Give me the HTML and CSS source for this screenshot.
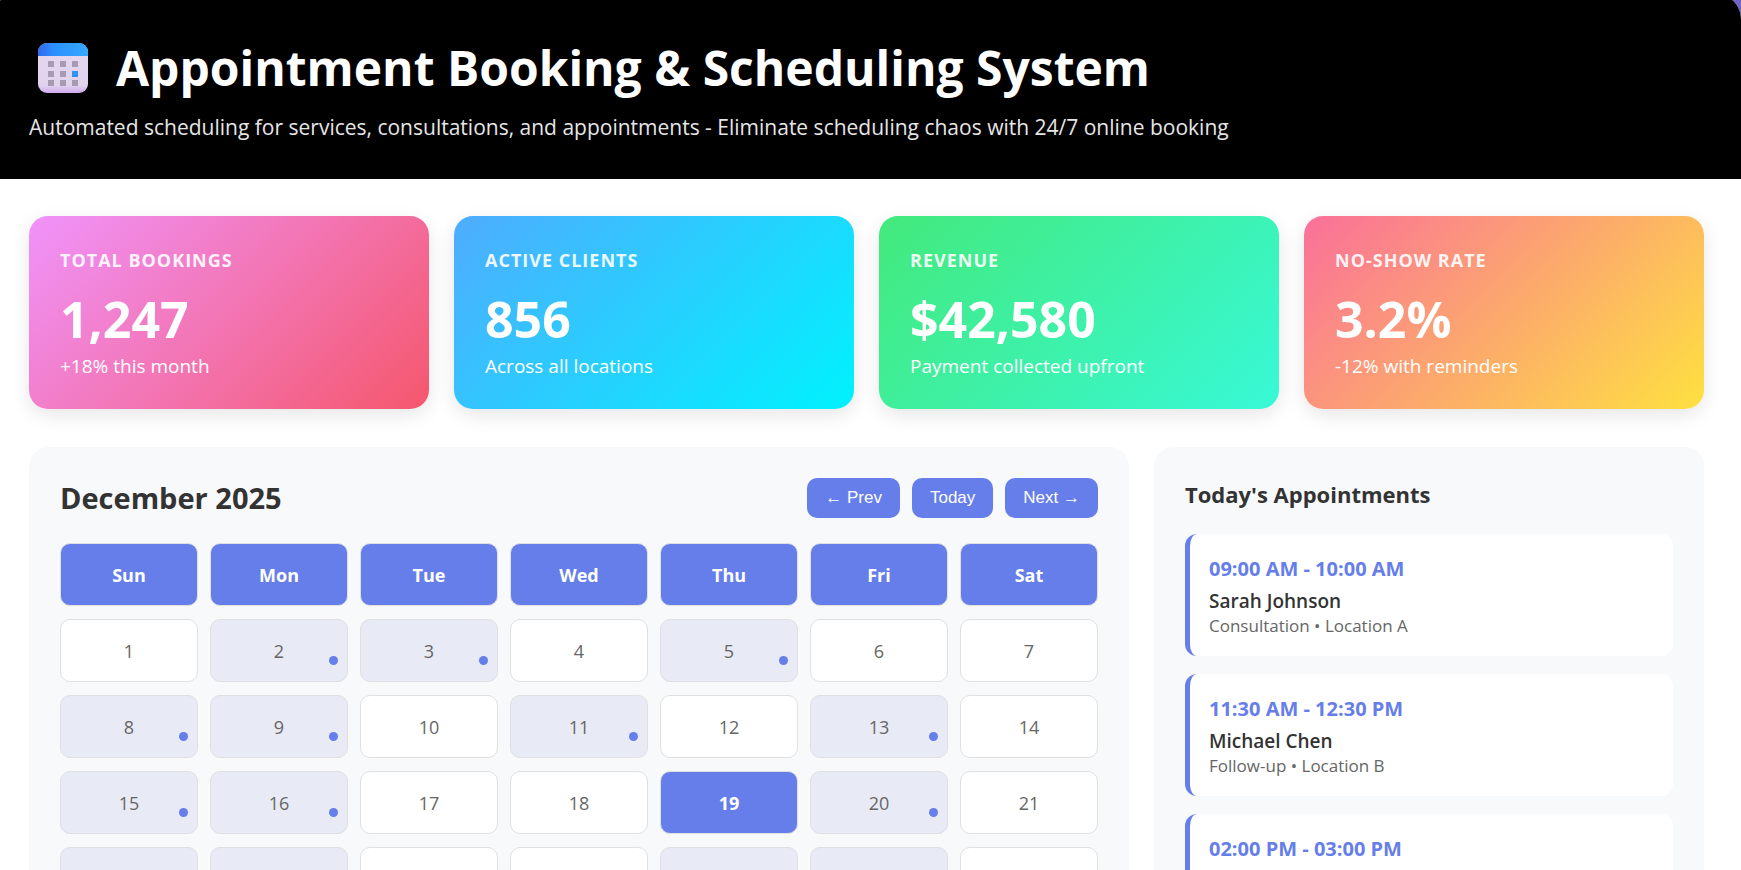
FILE: index.html
```html
<!DOCTYPE html>
<html lang="en">
<head>
<meta charset="utf-8">
<meta name="viewport" content="width=device-width, initial-scale=1">
<title>Appointment Booking &amp; Scheduling System</title>
<link rel="stylesheet" href="styles.css">
</head>
<body>
<div class="app">
  <header class="hero">
    <h1 class="hero-title">
      <svg class="hero-icon" viewBox="0 0 50 50" aria-hidden="true">
        <defs>
          <linearGradient id="top" x1="0" y1="0" x2="1" y2="0">
            <stop offset="0" stop-color="#3468ee"/><stop offset=".3" stop-color="#2c8ffb"/><stop offset="1" stop-color="#34a9ff"/>
          </linearGradient>
          <linearGradient id="page" x1="0" y1="0" x2="0" y2="1">
            <stop offset="0" stop-color="#e3d7ee"/><stop offset=".85" stop-color="#e1d3ee"/><stop offset="1" stop-color="#cfa9ee"/>
          </linearGradient>
          <clipPath id="sheet"><rect width="50" height="50" rx="9"/></clipPath>
        </defs>
        <g clip-path="url(#sheet)">
          <rect width="50" height="50" fill="url(#page)"/>
          <rect width="50" height="13" fill="url(#top)"/>
        </g>
        <g fill="#a79bb4">
          <rect x="10" y="18" width="6" height="6"/><rect x="22" y="18" width="6" height="6"/><rect x="34" y="18" width="6" height="6"/>
          <rect x="10" y="28" width="6" height="6"/><rect x="22" y="28" width="6" height="6"/><rect x="34" y="28" width="6" height="6" fill="#2f93f4"/>
          <rect x="10" y="37" width="6" height="6"/><rect x="22" y="37" width="6" height="6"/><rect x="34" y="37" width="6" height="6"/>
        </g>
      </svg>
      Appointment Booking &amp; Scheduling System
    </h1>
    <p class="hero-text">Automated scheduling for services, consultations, and appointments - Eliminate scheduling chaos with 24/7 online booking</p>
  </header>

  <main class="content">
    <section class="stats" aria-label="Statistics">
      <article class="stat stat-bookings">
        <h2 class="stat-label">Total Bookings</h2>
        <p class="stat-value">1,247</p>
        <p class="stat-note">+18% this month</p>
      </article>
      <article class="stat stat-clients">
        <h2 class="stat-label">Active Clients</h2>
        <p class="stat-value">856</p>
        <p class="stat-note">Across all locations</p>
      </article>
      <article class="stat stat-revenue">
        <h2 class="stat-label">Revenue</h2>
        <p class="stat-value">$42,580</p>
        <p class="stat-note">Payment collected upfront</p>
      </article>
      <article class="stat stat-noshow">
        <h2 class="stat-label">No-Show Rate</h2>
        <p class="stat-value">3.2%</p>
        <p class="stat-note">-12% with reminders</p>
      </article>
    </section>

    <div class="columns">
      <section class="panel">
        <div class="calendar-bar">
          <h2 class="calendar-title" id="month">December 2025</h2>
          <div class="calendar-nav">
            <button type="button" class="nav-button">← Prev</button>
            <button type="button" class="nav-button">Today</button>
            <button type="button" class="nav-button">Next →</button>
          </div>
        </div>
        <table class="calendar" aria-labelledby="month">
          <thead>
            <tr><th>Sun</th><th>Mon</th><th>Tue</th><th>Wed</th><th>Thu</th><th>Fri</th><th>Sat</th></tr>
          </thead>
          <tbody>
            <tr><td>1</td><td class="booked">2</td><td class="booked">3</td><td>4</td><td class="booked">5</td><td>6</td><td>7</td></tr>
            <tr><td class="booked">8</td><td class="booked">9</td><td>10</td><td class="booked">11</td><td>12</td><td class="booked">13</td><td>14</td></tr>
            <tr><td class="booked">15</td><td class="booked">16</td><td>17</td><td>18</td><td class="today">19</td><td class="booked">20</td><td>21</td></tr>
            <tr><td class="booked"></td><td class="booked"></td><td></td><td></td><td class="booked"></td><td class="booked"></td><td></td></tr>
          </tbody>
        </table>
      </section>

      <section class="panel">
        <h2 class="list-title">Today's Appointments</h2>
        <ul class="appointments">
          <li class="appointment">
            <p class="appointment-time">09:00 AM - 10:00 AM</p>
            <p class="appointment-name">Sarah Johnson</p>
            <p class="appointment-info">Consultation • Location A</p>
          </li>
          <li class="appointment">
            <p class="appointment-time">11:30 AM - 12:30 PM</p>
            <p class="appointment-name">Michael Chen</p>
            <p class="appointment-info">Follow-up • Location B</p>
          </li>
          <li class="appointment">
            <p class="appointment-time">02:00 PM - 03:00 PM</p>
          </li>
        </ul>
      </section>
    </div>
  </main>
</div>
</body>
</html>
```
FILE: styles.css
```css
* {
  box-sizing: border-box;
  margin: 0;
  padding: 0;
}

body {
  height: 100vh;
  overflow: hidden;
  background: linear-gradient(135deg, #667eea 0%, #764ba2 100%) 0 0 / 100% 200vh no-repeat;
  font-family: "Open Sans", "Noto Sans", sans-serif;
  color: #333;
}

.app {
  margin: -6px 0 0 -8px;
  border-radius: 25px;
  background: #fff;
  overflow: hidden;
}

.hero {
  padding: 40px 37px 36px;
  background: #000;
  color: #fff;
}

.hero-title {
  display: flex;
  align-items: center;
  gap: 28px;
  margin-bottom: 10px;
  padding-left: 9px;
  font-size: 48px;
  line-height: 68px;
  font-weight: 700;
}

.hero-icon {
  width: 50px;
  height: 50px;
}

.hero-text {
  font-size: 21px;
  line-height: 31px;
  opacity: 0.9;
}

.content {
  padding: 37px;
}

.stats {
  display: grid;
  grid-template-columns: repeat(4, 1fr);
  gap: 25px;
  margin-bottom: 38px;
}

.stat {
  padding: 31px 31px 29px;
  border-radius: 19px;
  color: #fff;
  box-shadow: 0 6px 19px rgba(0, 0, 0, 0.1);
}

.stat-bookings {
  background: linear-gradient(135deg, #f093fb 0%, #f5576c 100%);
}

.stat-clients {
  background: linear-gradient(135deg, #4facfe 0%, #00f2fe 100%);
}

.stat-revenue {
  background: linear-gradient(135deg, #43e97b 0%, #38f9d7 100%);
}

.stat-noshow {
  background: linear-gradient(135deg, #fa709a 0%, #fee140 100%);
}

.stat-label {
  margin-bottom: 12px;
  font-size: 18px;
  line-height: 26px;
  letter-spacing: 1px;
  text-transform: uppercase;
  opacity: 0.9;
}

.stat-value {
  font-size: 50px;
  line-height: 68px;
  font-weight: 700;
}

.stat-note {
  font-size: 19px;
  line-height: 27px;
}

.columns {
  display: grid;
  grid-template-columns: 2fr 1fr;
  gap: 25px;
}

.panel {
  padding: 31px;
  border-radius: 19px;
  background: #f8f9fb;
}

.calendar-bar {
  display: flex;
  justify-content: space-between;
  align-items: center;
  margin-bottom: 25px;
}

.calendar-title {
  font-size: 29px;
  line-height: 40px;
}

.calendar-nav {
  display: flex;
  gap: 12px;
}

.nav-button {
  height: 40px;
  padding: 0 18px;
  border: 0;
  border-radius: 10px;
  background: #667eea;
  color: #fff;
  font-family: "Liberation Sans", Arial, sans-serif;
  font-size: 17px;
}

.calendar {
  display: grid;
  grid-template-columns: repeat(7, 1fr);
  gap: 13px 12px;
}

.calendar thead,
.calendar tbody,
.calendar tr {
  display: contents;
}

.calendar th,
.calendar td {
  position: relative;
  min-height: 63px;
  padding: 19px 18px 17px;
  border: 1px solid #e0e0e0;
  border-radius: 10px;
  background: #fff;
  color: #666;
  font-size: 18px;
  line-height: 25px;
  text-align: center;
}

.calendar th,
.calendar .today {
  background: #667eea;
  color: #fff;
  font-weight: 700;
}

.calendar .booked {
  background: #e8eaf6;
}

.calendar .booked::after {
  content: "";
  position: absolute;
  right: 9px;
  bottom: 16px;
  width: 9px;
  height: 9px;
  border-radius: 50%;
  background: #667eea;
}

.list-title {
  margin-bottom: 24px;
  font-size: 22px;
  line-height: 32px;
}

.appointments {
  display: grid;
  gap: 18px;
  list-style: none;
}

.appointment {
  padding: 21px 19px 18px;
  border-left: 5px solid #667eea;
  border-radius: 12px;
  background: #fff;
}

.appointment-time {
  margin-bottom: 6px;
  color: #667eea;
  font-size: 20px;
  line-height: 27px;
  font-weight: 700;
}

.appointment-name {
  font-size: 19px;
  line-height: 26px;
  font-weight: 600;
}

.appointment-info {
  color: #666;
  font-size: 17px;
  line-height: 24px;
}
```
